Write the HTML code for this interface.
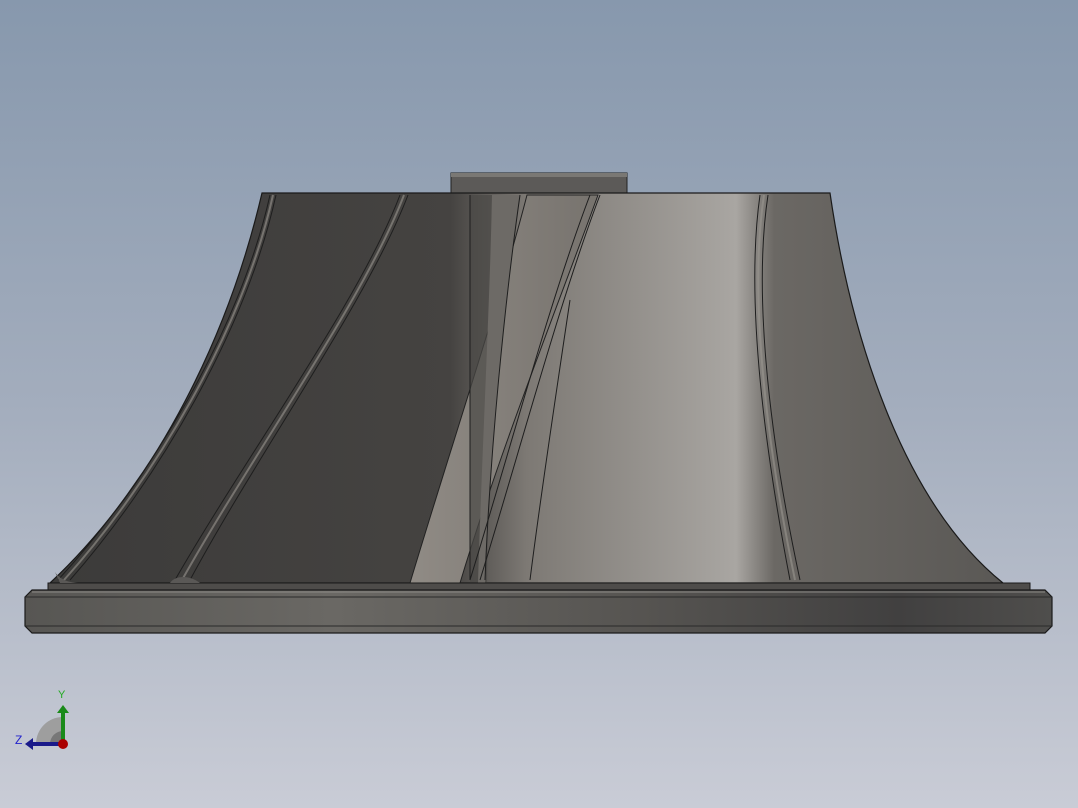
<!DOCTYPE html>
<html><head><style>html,body{margin:0;padding:0;width:1078px;height:808px;overflow:hidden}</style></head>
<body>
<svg width="1078" height="808" viewBox="0 0 1078 808" xmlns="http://www.w3.org/2000/svg">
<defs>
<linearGradient id="bg" x1="0" y1="0" x2="0" y2="1">
<stop offset="0" stop-color="#8798ad"/><stop offset="0.5" stop-color="#a3adbd"/><stop offset="1" stop-color="#c9ccd6"/></linearGradient>
<linearGradient id="body" x1="0" y1="0" x2="1" y2="0">
<stop offset="0" stop-color="#3c3b3a"/><stop offset="0.42" stop-color="#454341"/>
<stop offset="0.5" stop-color="#7d7974"/><stop offset="0.72" stop-color="#a9a6a2"/>
<stop offset="0.76" stop-color="#6b6864"/><stop offset="1" stop-color="#5a5855"/></linearGradient>
<linearGradient id="flange" x1="0" y1="0" x2="1" y2="0">
<stop offset="0" stop-color="#575653"/><stop offset="0.3" stop-color="#6a6864"/><stop offset="0.6" stop-color="#565451"/><stop offset="0.85" stop-color="#414040"/><stop offset="1" stop-color="#4f4e4c"/></linearGradient>
<linearGradient id="blade" x1="0" y1="0" x2="1" y2="0">
<stop offset="0" stop-color="#908b85"/><stop offset="1" stop-color="#77736e"/></linearGradient>
</defs>
<rect width="1078" height="808" fill="url(#bg)"/>
<!-- hub -->
<rect x="451" y="173" width="176" height="20" fill="#5c5a58" stroke="#222" stroke-width="1"/>
<rect x="451" y="173" width="176" height="4" fill="#7a7874"/>
<!-- body -->
<path d="M262 193 L830 193 C850 330 900 500 1003 583 L50 583 C160 480 230 330 262 193 Z" fill="url(#body)" stroke="#1a1a1a" stroke-width="1.2"/>
<!-- middle blade -->
<path d="M527 195 L598 195 C560 300 500 450 460 583 L410 583 C450 450 500 300 527 195 Z" fill="url(#blade)" stroke="#222" stroke-width="1"/>
<path d="M470 195 L492 195 L487 583 L470 583 Z" fill="#4a4846" opacity="0.7"/>
<path d="M492 195 L520 195 C505 300 490 450 485 583 L478 583 C482 450 490 300 492 195Z" fill="#6d6a66"/>
<!-- blade lines -->
<g fill="none" stroke="#1e1e1e" stroke-width="1">
<path d="M270 195 C240 330 150 480 58 580"/>
<path d="M276 195 C246 330 158 480 70 580"/>
<path d="M400 195 C360 300 250 450 175 580"/>
<path d="M408 195 C368 300 260 450 190 580"/>
<path d="M760 195 C745 300 765 450 790 580"/>
<path d="M768 195 C752 300 772 450 800 580"/>
<path d="M590 195 C550 300 510 450 470 580"/>
<path d="M600 195 C560 300 520 450 480 580"/>
<path d="M520 195 C505 300 490 450 485 580"/>
<path d="M570 300 C555 400 540 500 530 580"/>
<path d="M470 195 L470 580"/>
</g>
<g fill="none" stroke="#9a9690" stroke-width="2" opacity="0.6">
<path d="M273 195 C243 330 154 480 64 580"/>
<path d="M404 195 C364 300 255 450 182 580"/>
<path d="M764 195 C748 300 768 450 795 580"/>
</g>
<!-- base strip -->
<path d="M48 583 L1030 583 L1030 590 L48 590 Z" fill="#4e4c4a" stroke="#1a1a1a" stroke-width="1"/>
<path d="M55 572 C60 580 70 583 80 583 L170 583 C175 575 190 575 200 583 L400 583 L60 583Z" fill="#5a5856"/>
<!-- flange -->
<path d="M25 597 L32 590 L1045 590 L1052 597 L1052 626 L1045 633 L32 633 L25 626 Z" fill="url(#flange)" stroke="#1a1a1a" stroke-width="1.2"/>
<line x1="25" y1="597" x2="1052" y2="597" stroke="#2a2a2a" stroke-width="1"/>
<line x1="25" y1="626" x2="1052" y2="626" stroke="#2a2a2a" stroke-width="1"/>
<line x1="32" y1="592" x2="1045" y2="592" stroke="#8c8a86" stroke-width="1"/>
<!-- triad -->
<path d="M36 744 A27 27 0 0 1 63 717 L63 744 Z" fill="#9e9e9e"/>
<path d="M50 744 A13 13 0 0 1 63 731 L63 744 Z" fill="#777"/>
<rect x="61" y="712" width="4" height="32" fill="#1a8a1a"/>
<path d="M57 713 L63 705 L69 713 Z" fill="#1a8a1a"/>
<rect x="32" y="742" width="31" height="4" fill="#1a1a8a"/>
<path d="M33 738 L25 744 L33 750 Z" fill="#1a1a8a"/>
<circle cx="63" cy="744" r="5" fill="#a00"/>
<text x="58" y="698" font-family="Liberation Sans, sans-serif" font-size="11" fill="#2a2">Y</text>
<text x="15" y="744" font-family="Liberation Sans, sans-serif" font-size="12" fill="#22c">Z</text>
</svg>
</body></html>
